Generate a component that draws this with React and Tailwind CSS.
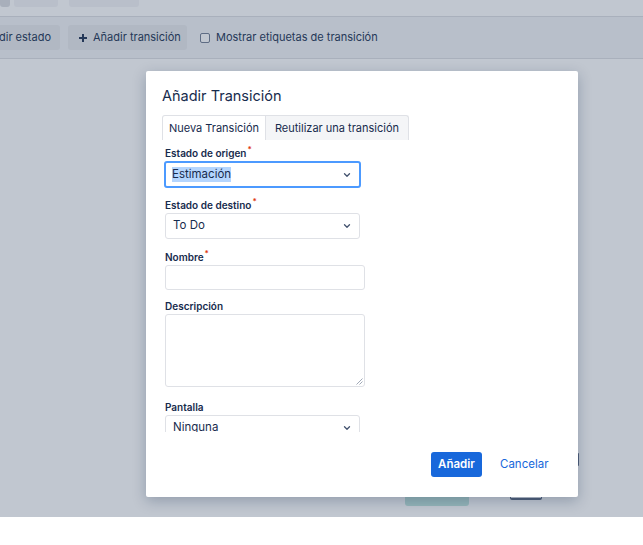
import React from "react";

const Chevron = () => (
  <svg width="8" height="6" viewBox="0 0 8 6" className="shrink-0">
    <path d="M1.5 1.8 L4 4.2 L6.5 1.8" fill="none" stroke="#42526e" strokeWidth="1.3" strokeLinecap="round" strokeLinejoin="round" />
  </svg>
);

const Label = ({ children, req }) => (
  <div className="flex items-start text-[10px] font-semibold text-[#172b4d] leading-[12px] h-[12px] shrink-0">
    <span>{children}</span>
    {req && <span className="text-[#de350b] text-[8px] leading-[8px] ml-[1px] -mt-[2px]">*</span>}
  </div>
);

export default function App() {
  return (
    <div
      className="w-[643px] h-[545px] bg-white flex flex-col overflow-hidden"
      style={{ fontFamily: "Inter, 'Noto Sans', sans-serif" }}
    >
      <div className="h-[517px] bg-[#c1c7d0] relative flex flex-col shrink-0">
        {/* top strip */}
        <div className="h-[16px] flex items-start shrink-0">
          <div className="w-[10px] h-[7px] bg-[#a8afbb] rounded-b-[3px]" />
          <div className="w-[44px] h-[7px] bg-[#b9bfca] rounded-b-[3px] ml-[4px]" />
          <div className="w-[70px] h-[7px] bg-[#b9bfca] rounded-b-[3px] ml-[11px]" />
        </div>
        <div className="h-[1px] bg-[#a9b0bc] shrink-0" />
        {/* toolbar */}
        <div className="h-[41px] bg-[#b8bfca] flex items-center text-[11px] text-[#253858] whitespace-nowrap shrink-0">
          <div className="h-[25px] w-[60px] bg-[#b1b8c3] rounded-r-[3px] flex items-center justify-end pr-[9px]">
            dir estado
          </div>
          <div className="h-[25px] w-[119px] bg-[#b1b8c3] rounded-[3px] ml-[8px] flex items-center pl-[11px]">
            <svg width="8" height="8" viewBox="0 0 8 8" className="mr-[6px]">
              <path d="M4 0 V8 M0 4 H8" stroke="#253858" strokeWidth="2" />
            </svg>
            Añadir transición
          </div>
          <div className="w-[10px] h-[10px] border border-[#5e6c84] rounded-[2px] ml-[13px] bg-[#c1c7d0]" />
          <span className="ml-[6px]">Mostrar etiquetas de transición</span>
        </div>
        <div className="h-[1px] bg-[#a9b0bc] shrink-0" />
        <div className="flex-1 relative">
          {/* elements behind modal */}
          <div className="absolute left-[575px] top-[394px] w-[4px] h-[13px] bg-[#505f79] rounded-[1px]" />
          <div className="absolute left-[405px] top-[430px] w-[64px] h-[17px] bg-[#95b5b8] rounded-[3px]" />
          <div className="absolute left-[510px] top-[430px] w-[32px] h-[11px] border-b-[2px] border-x-[1px] border-[#505f79] rounded-b-[2px]" />
          {/* modal */}
          <div className="absolute left-[146px] top-[12px] w-[432px] h-[426px] bg-white rounded-[2px] shadow-[0_4px_14px_rgba(9,30,66,0.25)] flex flex-col">
            <div className="pl-[16px] pt-[15px] text-[14.5px] leading-[20px] text-[#172b4d] shrink-0">Añadir Transición</div>
            <div className="pl-[16px] mt-[9px] flex text-[11px] text-[#172b4d] h-[25px] shrink-0">
              <div className="h-[25px] w-[104px] border border-[#dfe1e6] border-b-0 rounded-tl-[3px] flex items-center justify-center bg-white">
                Nueva Transición
              </div>
              <div className="h-[25px] w-[143px] border border-[#dfe1e6] border-l-0 border-b-0 rounded-tr-[3px] bg-[#f4f5f7] flex items-center justify-center">
                Reutilizar una transición
              </div>
            </div>
            <div className="h-[292px] overflow-hidden pl-[19px] pt-[7px] flex flex-col shrink-0">
              <Label req>Estado de origen</Label>
              <div className="mt-[2px] w-[197px] h-[27px] border-2 border-[#4c9aff] rounded-[3px] flex items-center pl-[6px] pr-[8px] justify-between -ml-[1px] shrink-0">
                <span className="text-[11.5px] text-[#172b4d] bg-[#b4d5fe] leading-[15px]">Estimación</span>
                <Chevron />
              </div>
              <div className="mt-[11px] shrink-0"><Label req>Estado de destino</Label></div>
              <div className="mt-[2px] w-[195px] h-[26px] border border-[#dfe1e6] rounded-[3px] flex items-center pl-[7px] pr-[8px] justify-between shrink-0">
                <span className="text-[11.5px] text-[#172b4d]">To Do</span>
                <Chevron />
              </div>
              <div className="mt-[12px] shrink-0"><Label req>Nombre</Label></div>
              <div className="mt-[2px] w-[200px] h-[25px] border border-[#dfe1e6] rounded-[3px] shrink-0" />
              <div className="mt-[10px] shrink-0"><Label>Descripción</Label></div>
              <div className="mt-[2px] w-[200px] h-[73px] border border-[#dfe1e6] rounded-[3px] relative shrink-0">
                <svg width="7" height="7" viewBox="0 0 7 7" className="absolute right-[1px] bottom-[1px]">
                  <path d="M6.5 0.5 L0.5 6.5 M6.5 3.5 L3.5 6.5" stroke="#8993a4" strokeWidth="0.8" />
                </svg>
              </div>
              <div className="mt-[14px] shrink-0"><Label>Pantalla</Label></div>
              <div className="mt-[2px] w-[195px] h-[26px] border border-[#dfe1e6] rounded-[3px] flex items-center pl-[7px] pr-[8px] justify-between shrink-0">
                <span className="text-[11.5px] text-[#172b4d]">Ninguna</span>
                <Chevron />
              </div>
            </div>
            <div className="flex items-center pl-[285px] mt-[20px] shrink-0">
              <div className="w-[51px] h-[25px] bg-[#1868db] rounded-[3px] text-white text-[11.5px] font-semibold flex items-center justify-center">
                Añadir
              </div>
              <div className="ml-[18px] text-[11.5px] text-[#1868db]">Cancelar</div>
            </div>
          </div>
        </div>
      </div>
    </div>
  );
}
